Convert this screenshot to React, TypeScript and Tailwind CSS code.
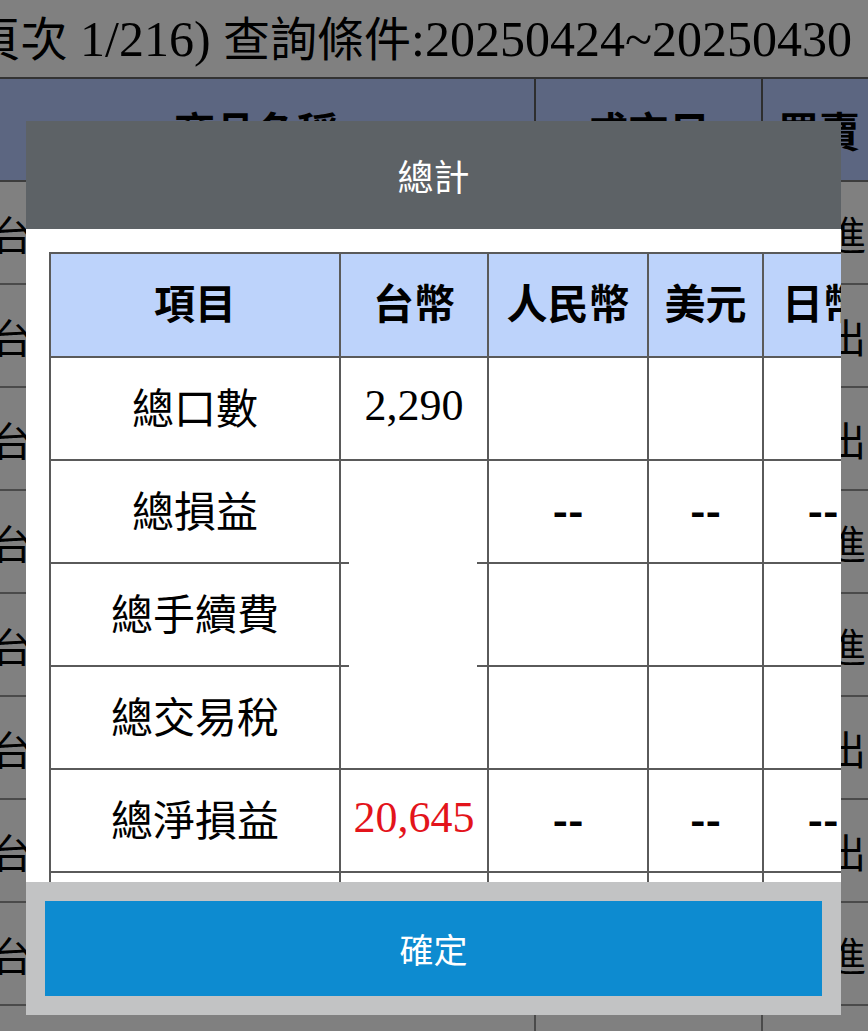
const sans = "font-['Noto_Sans_CJK_TC','Noto_Sans',sans-serif]";
const serif = "font-['Liberation_Serif','Noto_Sans_CJK_TC',serif]";

const sides = ["進", "出", "出", "進", "進", "出", "出", "進", ""];

const BgRow = ({ side }: { side: string }) => (
  <div className="flex h-[103px] border-b-2 border-[#4a4a4a]">
    <div className="w-[536px] flex items-center border-r-2 border-[#4a4a4a] overflow-hidden">
      <span className="-ml-[8px] whitespace-nowrap text-[40px]">{side ? "台指期" : ""}</span>
    </div>
    <div className="w-[227px] border-r-2 border-[#4a4a4a]" />
    <div className="w-[126px] flex items-center justify-center text-[40px]">
      {side ? (side === "進" ? "買進" : "賣出") : ""}
    </div>
  </div>
);

const cell = "border-2 border-[#5a5a5a] text-center align-middle p-0 pb-[6px]";
const num = `${cell} ${serif} text-[44px]`;
const dash = `${cell} font-bold`;

const App = () => {
  return (
    <div className={`relative w-[868px] h-[1031px] overflow-hidden bg-[#808080] text-black ${sans}`}>
      {/* dimmed page behind the dialog */}
      <div className="h-[79px] flex items-center justify-end pr-[16px] border-b-2 border-[#333333] overflow-hidden">
        <span className="whitespace-nowrap text-[47px]">
          (頁次<span className={`text-[50px] ${serif}`}> 1/216) </span>查詢條件
          <span className={`text-[50px] ${serif}`}>:20250424~20250430</span>
        </span>
      </div>
      <div className="flex h-[103px] w-[900px] bg-[#5c6681] border-b-2 border-[#3d3d3d] font-bold text-[41px]">
        <div className="w-[536px] flex items-center justify-center pr-[22px] border-r-2 border-[#2e2e2e]">商品名稱</div>
        <div className="w-[227px] flex items-center justify-center border-r-2 border-[#2e2e2e]">成交日</div>
        <div className="w-[112px] flex items-center justify-center">買賣</div>
      </div>
      <div className="w-[900px]">
        {sides.map((s, i) => (
          <BgRow key={i} side={s} />
        ))}
      </div>

      {/* dialog */}
      <div className="absolute left-[26px] top-[121px] w-[815px] h-[894px] flex flex-col">
        <div className="h-[108px] shrink-0 bg-[#5d6266] flex items-center justify-center text-white text-[36px]">
          總計
        </div>
        <div className="flex-1 bg-white overflow-hidden pl-[23px] pt-[23px]">
          <table className="border-collapse table-fixed w-[968px]">
            <colgroup>
              <col className="w-[290px]" />
              <col className="w-[148px]" />
              <col className="w-[160px]" />
              <col className="w-[115px]" />
              <col className="w-[120px]" />
              <col className="w-[135px]" />
            </colgroup>
            <thead>
              <tr className="h-[104px] bg-[#bdd3fb] text-[41px] font-bold">
                <th className={cell}>項目</th>
                <th className={cell}>台幣</th>
                <th className={cell}>人民幣</th>
                <th className={cell}>美元</th>
                <th className={cell}>日幣</th>
                <th className={cell}>港幣</th>
              </tr>
            </thead>
            <tbody className="text-[42px]">
              <tr className="h-[103px]">
                <td className={cell}>總口數</td>
                <td className={num}>2,290</td>
                <td className={cell}></td>
                <td className={cell}></td>
                <td className={cell}></td>
                <td className={cell}></td>
              </tr>
              <tr className="h-[103px]">
                <td className={cell}>總損益</td>
                <td className={`${cell} relative`} rowSpan={3}>
                  <span className="absolute left-0 top-[101px] w-[8px] h-[2px] bg-[#5a5a5a]" />
                  <span className="absolute right-0 top-[101px] w-[10px] h-[2px] bg-[#5a5a5a]" />
                  <span className="absolute left-0 top-[204px] w-[8px] h-[2px] bg-[#5a5a5a]" />
                  <span className="absolute right-0 top-[204px] w-[10px] h-[2px] bg-[#5a5a5a]" />
                </td>
                <td className={dash}>--</td>
                <td className={dash}>--</td>
                <td className={dash}>--</td>
                <td className={dash}>--</td>
              </tr>
              <tr className="h-[103px]">
                <td className={cell}>總手續費</td>
                <td className={cell}></td>
                <td className={cell}></td>
                <td className={cell}></td>
                <td className={cell}></td>
              </tr>
              <tr className="h-[103px]">
                <td className={cell}>總交易稅</td>
                <td className={cell}></td>
                <td className={cell}></td>
                <td className={cell}></td>
                <td className={cell}></td>
              </tr>
              <tr className="h-[103px]">
                <td className={cell}>總淨損益</td>
                <td className={`${num} text-[#e3141b]`}>20,645</td>
                <td className={dash}>--</td>
                <td className={dash}>--</td>
                <td className={dash}>--</td>
                <td className={dash}>--</td>
              </tr>
              <tr className="h-[103px]">
                <td className={cell}>平均損益</td>
                <td className={cell}></td>
                <td className={cell}></td>
                <td className={cell}></td>
                <td className={cell}></td>
                <td className={cell}></td>
              </tr>
            </tbody>
          </table>
        </div>
        <div className="h-[133px] shrink-0 bg-[#c2c3c4] p-[19px]">
          <button className="w-full h-full bg-[#0d8bd0] text-white text-[34px] flex items-center justify-center">
            確定
          </button>
        </div>
      </div>
    </div>
  );
};

export default App;
